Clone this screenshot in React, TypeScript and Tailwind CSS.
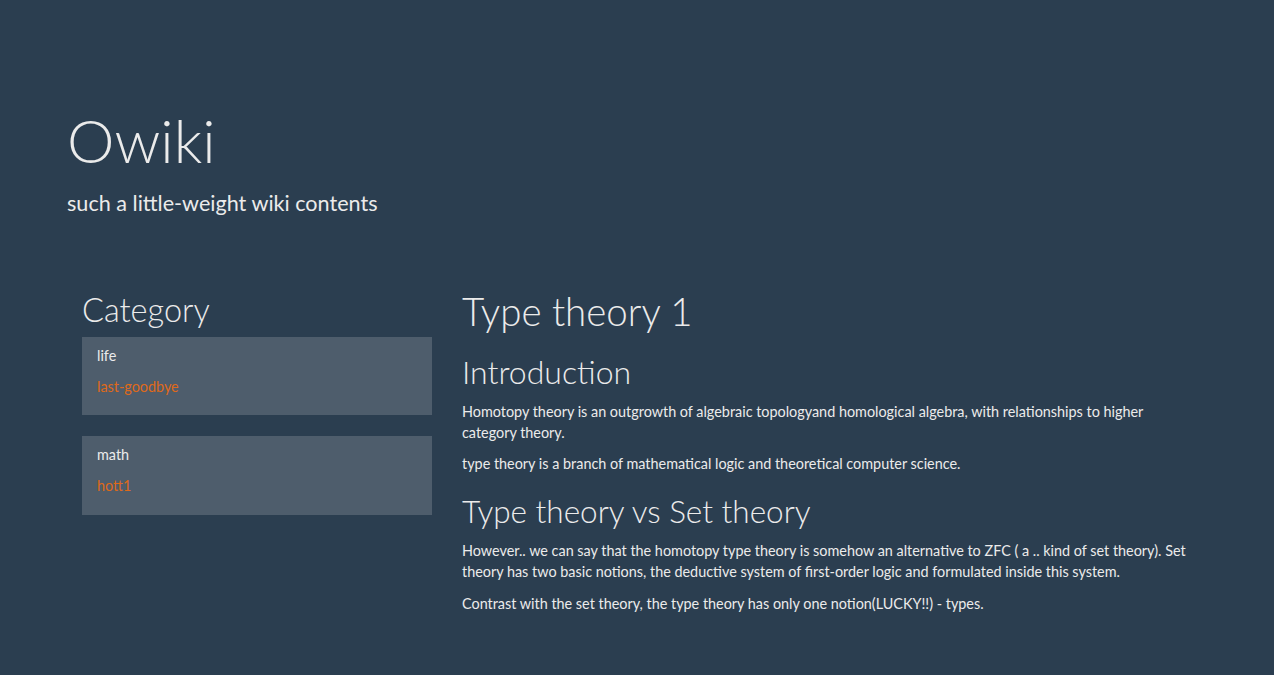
import React from "react";

export default function App() {
  return (
    <div
      className="min-h-[675px] w-full bg-[#2b3e50] text-[#ebebeb] text-[14.4px] leading-[21px]"
      style={{ fontFamily: "Lato, 'Open Sans', sans-serif" }}
    >
      <div className="mx-auto w-[1170px] px-[15px]">
        <header className="pt-[107px]">
          <h1 className="text-[60px] leading-[66px] font-light">Owiki</h1>
          <p className="mt-[15px] text-[21.6px] leading-[30px] font-normal">
            such a little-weight wiki contents
          </p>
        </header>
        <div className="mt-[72px] flex">
          <aside className="w-[380px] px-[15px]">
            <h2 className="pt-[2px] text-[32.5px] leading-[36px] font-light">Category</h2>
            <div className="mt-[9px] bg-[#4e5d6c] px-[15px] pt-[9px] pb-[18px] leading-[20px]">
              <div>life</div>
              <a className="mt-[11px] block text-[#df691a]" href="#">
                last-goodbye
              </a>
            </div>
            <div className="mt-[21px] bg-[#4e5d6c] px-[15px] pt-[9px] pb-[19px] leading-[20px]">
              <div>math</div>
              <a className="mt-[11px] block text-[#df691a]" href="#">
                hott1
              </a>
            </div>
          </aside>
          <main className="w-[760px] px-[15px]">
            <h1 className="text-[38.5px] leading-[42px] font-light">Type theory 1</h1>
            <h2 className="mt-[22px] text-[32px] leading-[35px] font-light">Introduction</h2>
            <p className="mt-[12px]">
              Homotopy theory is an outgrowth of algebraic topologyand homological algebra, with
              relationships to higher category theory.
            </p>
            <p className="mt-[10px]">
              type theory is a branch of mathematical logic and theoretical computer science.
            </p>
            <h2 className="mt-[20px] text-[31.5px] leading-[35px] font-light">
              Type theory vs Set theory
            </h2>
            <p className="mt-[11px]">
              However.. we can say that the homotopy type theory is somehow an alternative to ZFC ( a ..
              kind of set theory). Set theory has two basic notions, the deductive system of
              first-order logic and formulated inside this system.
            </p>
            <p className="mt-[11px]">
              Contrast with the set theory, the type theory has only one notion(LUCKY!!) - types.
            </p>
          </main>
        </div>
      </div>
    </div>
  );
}
